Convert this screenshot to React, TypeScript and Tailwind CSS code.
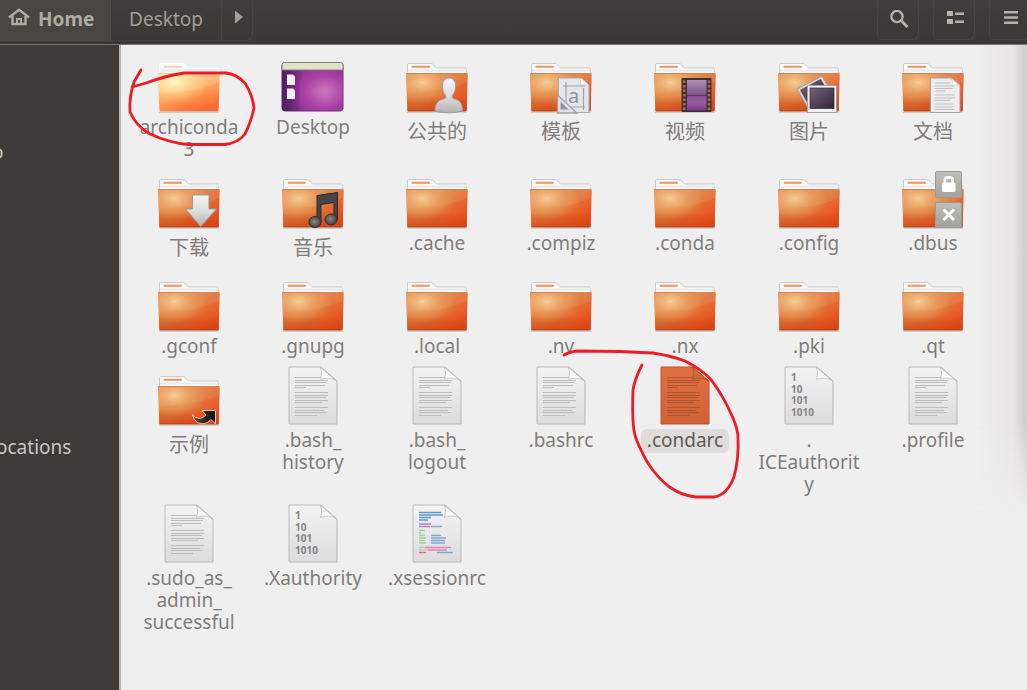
import React from 'react'

type Kind = 'folder' | 'desktop' | 'text' | 'binary' | 'code'

type Item = {
  lines: string[];
  kind: Kind;
  emblem?: string;
  cjk?: boolean;
  bright?: boolean;
  selected?: boolean;
}

const items: Item[] = [
  { lines: ["archiconda", "3"], kind: "folder", bright: true },
  { lines: ["Desktop"], kind: "desktop" },
  { lines: ["公共的"], kind: "folder", emblem: "person", cjk: true },
  { lines: ["模板"], kind: "folder", emblem: "template", cjk: true },
  { lines: ["视频"], kind: "folder", emblem: "video", cjk: true },
  { lines: ["图片"], kind: "folder", emblem: "pictures", cjk: true },
  { lines: ["文档"], kind: "folder", emblem: "document", cjk: true },
  { lines: ["下载"], kind: "folder", emblem: "download", cjk: true },
  { lines: ["音乐"], kind: "folder", emblem: "music", cjk: true },
  { lines: [".cache"], kind: "folder" },
  { lines: [".compiz"], kind: "folder" },
  { lines: [".conda"], kind: "folder" },
  { lines: [".config"], kind: "folder" },
  { lines: [".dbus"], kind: "folder", emblem: "locked" },
  { lines: [".gconf"], kind: "folder" },
  { lines: [".gnupg"], kind: "folder" },
  { lines: [".local"], kind: "folder" },
  { lines: [".nv"], kind: "folder" },
  { lines: [".nx"], kind: "folder" },
  { lines: [".pki"], kind: "folder" },
  { lines: [".qt"], kind: "folder" },
  { lines: ["示例"], kind: "folder", emblem: "link", cjk: true },
  { lines: [".bash_", "history"], kind: "text" },
  { lines: [".bash_", "logout"], kind: "text" },
  { lines: [".bashrc"], kind: "text" },
  { lines: [".condarc"], kind: "text", selected: true },
  { lines: [".", "ICEauthorit", "y"], kind: "binary" },
  { lines: [".profile"], kind: "text" },
  { lines: [".sudo_as_", "admin_", "successful"], kind: "text" },
  { lines: [".Xauthority"], kind: "binary" },
  { lines: [".xsessionrc"], kind: "code" },
];

// Gradients shared by every icon in the grid
function IconDefs() {
  return (
    <svg width="0" height="0" className="absolute" aria-hidden="true">
      <defs>
        <linearGradient id="folder" x1="0" y1="0.1" x2="1" y2="0.9">
          <stop offset="0" stopColor="#e28a4c" />
          <stop offset="0.5" stopColor="#e07a3c" />
          <stop offset="0.85" stopColor="#ec5220" />
          <stop offset="1" stopColor="#e24a18" />
        </linearGradient>
        <linearGradient id="folderBright" x1="0.1" y1="0" x2="0.6" y2="1">
          <stop offset="0" stopColor="#ffdf98" />
          <stop offset="0.5" stopColor="#ffab61" />
          <stop offset="1" stopColor="#ff6a30" />
        </linearGradient>
        <radialGradient id="shine" cx="0.27" cy="0.25" r="0.55">
          <stop offset="0" stopColor="#f9d9a2" stopOpacity="0.85" />
          <stop offset="0.5" stopColor="#f3bd7c" stopOpacity="0.4" />
          <stop offset="1" stopColor="#f0a868" stopOpacity="0" />
        </radialGradient>
        <radialGradient id="shineBright" cx="0.27" cy="0.25" r="0.55">
          <stop offset="0" stopColor="#fffbc4" stopOpacity="0.95" />
          <stop offset="1" stopColor="#ffd890" stopOpacity="0" />
        </radialGradient>
        <linearGradient id="folderLow" x1="0" y1="0" x2="0" y2="1">
          <stop offset="0.6" stopColor="#cc4212" stopOpacity="0" />
          <stop offset="1" stopColor="#cc4212" stopOpacity="0.7" />
        </linearGradient>
        <linearGradient id="paper" x1="0" y1="0" x2="0" y2="1">
          <stop offset="0" stopColor="#f3f3f3" />
          <stop offset="1" stopColor="#dcdcdd" />
        </linearGradient>
        <linearGradient id="paperSel" x1="0" y1="0" x2="0" y2="1">
          <stop offset="0" stopColor="#e1703f" />
          <stop offset="1" stopColor="#cf6236" />
        </linearGradient>
        <linearGradient id="silver" x1="0" y1="0" x2="0" y2="1">
          <stop offset="0" stopColor="#f4f4f4" />
          <stop offset="0.5" stopColor="#dededf" />
          <stop offset="1" stopColor="#b4b4b4" />
        </linearGradient>
        <radialGradient id="purple" cx="0.7" cy="0.6" r="0.7">
          <stop offset="0" stopColor="#cf77bd" />
          <stop offset="0.5" stopColor="#a93fa5" />
          <stop offset="1" stopColor="#792c83" />
        </radialGradient>
        <linearGradient id="desktopShade" x1="0" y1="0" x2="1" y2="0">
          <stop offset="0" stopColor="#3f1850" stopOpacity="0.7" />
          <stop offset="1" stopColor="#3f1850" stopOpacity="0" />
        </linearGradient>
        <linearGradient id="film" x1="0" y1="0" x2="0" y2="1">
          <stop offset="0" stopColor="#b08fba" />
          <stop offset="0.48" stopColor="#7d5489" />
          <stop offset="0.5" stopColor="#54305f" />
          <stop offset="0.54" stopColor="#8b4e96" />
          <stop offset="0.75" stopColor="#9a5ca3" />
          <stop offset="1" stopColor="#733b80" />
        </linearGradient>
        <linearGradient id="photo" x1="0" y1="0" x2="1" y2="1">
          <stop offset="0" stopColor="#786178" />
          <stop offset="1" stopColor="#30253a" />
        </linearGradient>
        <radialGradient id="note" cx="0.45" cy="0.45" r="0.6">
          <stop offset="0" stopColor="#888" />
          <stop offset="1" stopColor="#3a3a3a" />
        </radialGradient>
        <linearGradient id="badge" x1="0" y1="0" x2="0" y2="1">
          <stop offset="0" stopColor="#bfc0ba" />
          <stop offset="1" stopColor="#a0a29b" />
        </linearGradient>
        <linearGradient id="link" x1="0" y1="0" x2="1" y2="0">
          <stop offset="0" stopColor="#7a4a38" />
          <stop offset="0.6" stopColor="#2b211e" />
          <stop offset="1" stopColor="#111" />
        </linearGradient>
      </defs>
    </svg>
  );
}

function Emblem({ name }: { name?: string }) {
  switch (name) {
    case "person":
      return (
        <path d="M30 58.500C30 51 33 48 40 46.500C41 45.500 41 44 40 42.500C37.500 40 37.500 36 37.500 33.500C37.500 28.500 40 26 44 26C48 26 50.500 28.500 50.500 33.500C50.500 37 50 40 48 42.500C47 44 47 45.500 48 46.500C55 48 57.500 51 57.500 58.500C52 61.500 35 61.500 30 58.500Z" fill="url(#silver)" stroke="#9b9b9b" />
      );
    case "template":
      return (
        <g>
          <path d="M29.500 26H52L60 33V60.500H29.500Z" fill="#e6e7ea" stroke="#a9abb0" />
          <path d="M52 26L51 33H60Z" fill="#fafafa" stroke="#c5c6ca" strokeWidth="0.700" />
          <path d="M34 34H56M34 55H56M37 30V58M54.500 36V58" stroke="#a0a2ae" strokeWidth="1.200" />
          <text x="39" y="51" fontSize="20" fontFamily="Noto Sans, sans-serif" fill="#9093a3">a</text>
          <path d="M28.500 43L48 61H28.500Z" fill="#dfe0e5" stroke="#a0a2aa" strokeWidth="1.300" />
          <path d="M31.500 49.500L39.500 57.500H31.500Z" fill="#9092a2" />
        </g>
      );
    case "video":
      return (
        <g>
          <rect x="28.500" y="26" width="30" height="34" rx="1" fill="#3b3236" />
          <rect x="34" y="28" width="19.500" height="30.500" fill="url(#film)" />
          <path d="M31.200 28.500V59" stroke="#c06243" strokeWidth="2.600" strokeDasharray="2.500 2" />
          <path d="M56 28.500V59" stroke="#c06243" strokeWidth="2.600" strokeDasharray="2.500 2" />
        </g>
      );
    case "pictures":
      return (
        <g>
          <path d="M20 37L45 24L58 46L32 58Z" fill="#d8d4d4" stroke="#9a9090" strokeWidth="0.800" />
          <path d="M23 38L43.500 27L53 42L32 54Z" fill="url(#photo)" />
          <rect x="30.500" y="33.500" width="29" height="27" fill="#f3f1f1" stroke="#a6a1a1" />
          <rect x="33" y="36" width="24" height="20.500" fill="url(#photo)" stroke="#2c2330" strokeWidth="0.700" />
        </g>
      );
    case "document":
      return (
        <g>
          <path d="M29.500 26H51L59 33V60.500H29.500Z" fill="#ececed" stroke="#a3a3a3" />
          <path d="M34 31H49M34 34H53M34 36.500H52M34 39H44M34 43H53M34 46H54M34 48.500H49M34 52H53M34 55H52M34 57.500H53" stroke="#c2c2c2" />
          <path d="M50 26.500C52 29 51.500 32 51 33.500C54 32.500 57 32.500 58.500 33.500Z" fill="#fff" stroke="#c4c4c4" strokeWidth="0.600" />
        </g>
      );
    case "download":
      return (
        <path d="M35.500 27H52V41H59.500L43.700 58.500L28.500 41H35.500Z" fill="url(#silver)" stroke="#999" strokeWidth="1" />
      );
    case "music":
      return (
        <g>
          <path d="M36 27.500L56.500 24.500V52H53V34.500L40 36.500V54H36Z" fill="#454548" stroke="#2b2b2b" strokeWidth="1" strokeLinejoin="round" />
          <ellipse cx="34" cy="54" rx="6" ry="5.500" fill="url(#note)" stroke="#303030" />
          <ellipse cx="50" cy="51.500" rx="6" ry="5.500" fill="url(#note)" stroke="#303030" />
        </g>
      );
    case "locked":
      return (
        <g>
          <rect x="34.500" y="3.500" width="26" height="26" rx="1.500" fill="url(#badge)" stroke="#999b95" />
          <rect x="41" y="14.500" width="13.500" height="9.500" rx="1.500" fill="#fff" />
          <path d="M43.800 15V12C43.800 8.500 51.700 8.500 51.700 12V15" fill="none" stroke="#fff" strokeWidth="2.600" />
          <rect x="34.500" y="34.500" width="26" height="25" rx="1.500" fill="url(#badge)" stroke="#999b95" />
          <path d="M42.500 41.500L53 52M53 41.500L42.500 52" stroke="#fff" strokeWidth="3" />
        </g>
      );
    case "link":
      return (
        <path d="M45 45.500H58.500V59L54 54.500C49 60.500 38 61 35.500 49.500C40 55 45 54 49 50Z" fill="url(#link)" stroke="#f6d9cd" strokeWidth="0.900" />
      );
    default:
      return null;
  }
}

function FolderIcon({ emblem, bright }: { emblem?: string; bright?: boolean }) {
  return (
    <>
      <path d="M2.500 59V13C2.500 12 3 11.500 4 11.500H26C27.500 11.500 28 12.200 29 13.500C30 15 31 16 33 16H60C61 16 61.300 16.500 61.300 17.500V59Z" fill="#fafafa" stroke={bright ? "#fff" : "#cbc9cb"} />
      <path d="M7.500 14.800H24" stroke={bright ? "#eed7b4" : "#f0935c"} strokeWidth="2" strokeLinecap="round" />
      <path d="M3 18.500H61" stroke="#e9e9ec" strokeWidth="2" />
      <path d="M2 60H62" stroke="#000" strokeOpacity="0.180" strokeWidth="1.500" />
      <path d="M1 22C1 21.300 1.500 21 2 21H61.700C62.300 21 62.700 21.300 62.700 22L61.700 57.500C61.700 58.500 61 59.300 60 59.300H4C3 59.300 2.300 58.500 2.300 57.500Z" fill={bright ? "url(#folderBright)" : "url(#folder)"} />
      {!bright && <path d="M1 21H62.700L61.700 59H2.300Z" fill="url(#folderLow)" />}
      <path d="M2 22H62V30C45 38 22 40 2.500 41Z" fill="#fff" fillOpacity={bright ? 0.12 : 0.07} />
      <path d="M1 21H62.700L61.700 59H2.300Z" fill={bright ? "url(#shineBright)" : "url(#shine)"} />
      <path d="M1.500 21.500H62" stroke={bright ? "#f5c98e" : "#d5824c"} strokeWidth="1" />
      {!bright && <path d="M3 58.800H61" stroke="#b83d12" strokeOpacity="0.600" />}
      <Emblem name={emblem} />
    </>
  );
}

function DesktopIcon() {
  return (
    <>
      <rect x="1" y="10.500" width="61" height="48.500" rx="3" fill="url(#purple)" stroke="#6e3577" />
      <path d="M1 17H24C16 30 20 45 18 59H4C2.500 59 1 58 1 56Z" fill="url(#desktopShade)" />
      <path d="M1 18V13C1 11.500 2 10.500 3.500 10.500H59.500C61 10.500 62 11.500 62 13V18Z" fill="#e2e2cc" stroke="#85816f" />
      <path d="M6 22.500H12L14 24.500V33H6ZM6 36.500H12L14 38.500V47H6Z" fill="#f5eef7" />
    </>
  );
}

function FileIcon({ kind, selected }: { kind: Kind; selected?: boolean }) {
  const ink = selected ? "#b0562f" : "#bcbcbc";
  return (
    <>
      <path d="M8 2H40L56 16V59H8Z" fill={selected ? "url(#paperSel)" : "url(#paper)"} stroke={selected ? "#c0562b" : "#b9b9b9"} />
      {kind === "text" && (
        <path d="M14 12.500H45M14 15.500H47M14 17.500H46M14 20.500H44M14 22.500H25M14 27.500H47M14 30.500H47M14 32.500H45M14 35.500H47M14 37.500H41M14 42.500H47M14 45.500H43M14 47.500H46M14 50.500H36" stroke={ink} />
      )}
      {kind === "binary" && (
        <g fontFamily="Noto Sans, sans-serif" fontWeight="700" fontSize="10" fill="#858585">
          <text x="14" y="16">1</text>
          <text x="14" y="28">10</text>
          <text x="14" y="39">101</text>
          <text x="14" y="51">1010</text>
        </g>
      )}
      {kind === "code" && (
        <g strokeWidth="1.400" fill="none">
          <path d="M14 9.500H36M14 12H38M14 14.500H26M14 17H23" stroke="#5c9cc4" />
          <path d="M14 21H26M14 23.500H25" stroke="#c079cb" />
          <path d="M26 23.500H37M26 32.500H36M26 35H41M26 37.500H40M26 40H40M32 49.500H48" stroke="#7fabca" />
          <path d="M14 27.500H20M14 30H16M14 32.500H20M14 35H21M14 37.500H20M14 40H21" stroke="#a2d39c" />
          <path d="M20 44.500H46M23 47H42" stroke="#df86b8" />
          <path d="M14 44.500H20M14 47H23" stroke="#c4c4c4" />
          <path d="M14 49.500H21" stroke="#e56a72" />
        </g>
      )}
      <path d="M39.500 2.500C41 6 40.500 11 39.500 14.500C44 12.500 51 12.500 55.500 16Z" fill={selected ? "#d0683d" : "#fbfbfb"} stroke={selected ? "#b55028" : "#bdbdbd"} strokeWidth="0.800" />
    </>
  );
}

function FileItem({ item }: { item: Item }) {
  return (
    <button type="button" className="flex flex-col items-center">
      <svg width="64" height="60" viewBox="0 0 64 60" className="overflow-visible" aria-hidden="true">
        {item.kind === "folder" && <FolderIcon emblem={item.emblem} bright={item.bright} />}
        {item.kind === "desktop" && <DesktopIcon />}
        {item.kind !== "folder" && item.kind !== "desktop" && (
          <FileIcon kind={item.kind} selected={item.selected} />
        )}
      </svg>
      <span
        className={`mt-1 rounded-md px-1.5 text-center whitespace-nowrap ${item.cjk ? "pt-px text-[20px] leading-[30px]" : "text-[19px] leading-[22px]"} ${
          item.selected ? "bg-[#dfdcdb] pb-0.5 text-[#5f5b59]" : "text-[#807d7b]"
        }`}
      >
        {item.lines.map((line) => (
          <span key={line} className="block">{line}</span>
        ))}
      </span>
    </button>
  );
}

function Header() {
  const tool = "h-10 rounded-b-md border border-t-0 border-[#474440] flex justify-center pt-2.5 text-[#b5b0a9]";
  return (
    <header className="flex h-[45px] items-start justify-between overflow-hidden border-b border-[#77736f] bg-linear-to-b from-[#3f3e3c] to-[#3b3734]">
      <nav className="flex text-[19px] leading-[22px] text-[#a29d95]">
        <button type="button" className="flex h-[41px] w-[111px] items-start gap-2 border-r border-b border-[#4f4c48] bg-[#494641] pt-2 pl-2 font-bold text-[#b0aba2]">
          <svg width="22" height="18" viewBox="0 0 22 18" fill="none" stroke="currentColor" strokeWidth="2.400" aria-hidden="true">
            <path d="M1 9.500L11 1.700L21 9.500" />
            <path d="M4.500 8V16H17.500V8" />
            <path d="M9 16V11H13V16" strokeWidth="2" />
          </svg>
          Home
        </button>
        <button type="button" className="flex h-[41px] w-[111px] items-start justify-center border-r border-b border-[#474440] pt-2">
          Desktop
        </button>
        <button type="button" aria-label="Next folder" className="flex h-[41px] w-[31px] justify-center rounded-br-md border-r border-b border-[#474440] pt-2.5 pl-1">
          <svg width="8" height="14" viewBox="0 0 8 14" fill="currentColor" aria-hidden="true">
            <path d="M0 0.500L8 7L0 13.500Z" />
          </svg>
        </button>
      </nav>
      <div className="flex gap-3.5">
        <button type="button" aria-label="Search" className={`${tool} w-[42px] pl-0.5`}>
          <svg width="20" height="18" viewBox="0 0 20 18" fill="none" stroke="currentColor" aria-hidden="true">
            <circle cx="8" cy="6.500" r="5.600" strokeWidth="2.400" />
            <path d="M12 10.500L18.500 17" strokeWidth="3" />
          </svg>
        </button>
        <button type="button" aria-label="List view" className={`${tool} w-[42px] pl-0.5`}>
          <svg width="18" height="15" viewBox="0 0 18 15" fill="currentColor" aria-hidden="true">
            <path d="M1 1H7V6H1ZM1 9H7V14H1ZM9 2.500H18V5H9ZM9 10.500H18V13H9Z" />
          </svg>
        </button>
        <button type="button" aria-label="Menu" className={`${tool} -mr-1 w-[42px] pl-0.5`}>
          <svg width="14" height="15" viewBox="0 0 14 15" fill="currentColor" aria-hidden="true">
            <path d="M0 1H14V3.500H0ZM0 6.200H14V8.700H0ZM0 11.500H14V14H0Z" />
          </svg>
        </button>
      </div>
    </header>
  );
}

// Red pen strokes lying over the file grid
function PenMarks() {
  return (
    <svg width="760" height="510" viewBox="0 0 760 510" className="pointer-events-none absolute top-0 left-0" fill="none" stroke="#ed1c24" strokeWidth="2.800" strokeLinecap="round" strokeLinejoin="round" aria-hidden="true">
      <path d="M141 70L134 82Q129 97 130 112Q136 126 150 134Q170 143 188 144.500H225Q238 143 245 134Q251 122 254 108Q253 96 245 83Q236 74 226 73H184Q165 76 146 83L132 87" />
      <path d="M564 355Q569 352 577 351L620 351.500L653 353Q672 356 685 361Q703 370 712 381Q724 397 733 418Q738 430 738 438Q739 458 734 477Q727 495 714 497H696Q682 496 668 486Q650 471 641 450Q635 438 634 430Q632 418 633 390Q635 378 642 365" />
    </svg>
  );
}

function App() {
  return (
    <div className="relative flex min-h-screen flex-col overflow-hidden bg-[#3e3a37] font-['Noto_Sans','Noto_Sans_CJK_SC',sans-serif]">
      <IconDefs />
      <Header />
      <div className="flex flex-1">
        <aside className="w-[119px] shrink-0 overflow-hidden text-[19px] leading-[22px] text-[#c9c6c1]">
          <ul className="-ml-2 pt-24">
            <li><a href="#desktop">o</a></li>
            <li className="pt-[273px] pl-1"><a href="#locations">ocations</a></li>
          </ul>
        </aside>
        <main className="relative flex-1 border-l-2 border-[#b9b4b0] bg-[#f0efef]">
          {/* shadow cast from the right-hand window */}
          <div className="absolute top-0 right-0 h-[470px] w-13 bg-linear-to-l from-[#cfcbcb] via-[#e6e4e4] via-25% to-[#f0efef] mask-b-from-80%" />
          <div className="relative grid grid-cols-[repeat(auto-fill,124px)] items-start gap-y-2 pt-[7px] pl-1.5">
            {items.map((item) => (
              <FileItem key={item.lines.join("")} item={item} />
            ))}
          </div>
        </main>
      </div>
      <PenMarks />
    </div>
  );
}

export default App
